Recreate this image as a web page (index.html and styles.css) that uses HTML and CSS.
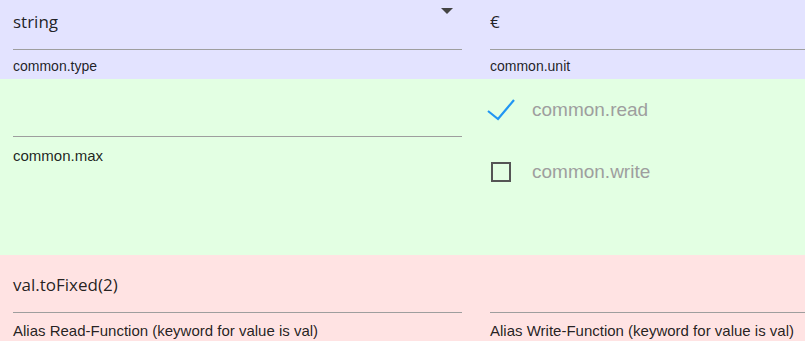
FILE: index.html
```html
<!DOCTYPE html>
<html lang="en">
  <head>
    <meta charset="UTF-8" />
    <meta name="viewport" content="width=device-width, initial-scale=1.0" />
    <title>State settings</title>

    <link rel="stylesheet" href="styles.css">
  </head>
  <body>
    <!-- Type / unit -->
    <div class="row row-type">
      <div class="cell">
        <div class="value select">
          string
          <span class="arrow"></span>
        </div>
        <div class="label">common.type</div>
      </div>
      <div class="cell cell-right">
        <div class="value">€</div>
        <div class="label">common.unit</div>
      </div>
    </div>

    <!-- Max / flags -->
    <div class="row row-limits">
      <div class="cell">
        <div class="value value-tall"></div>
        <div class="label label-max">common.max</div>
      </div>
      <div class="cell cell-right">
        <div class="check-list">
          <div class="check-row">
            <svg class="check-icon" width="30" height="30" viewBox="0 0 30 30">
              <path d="M2 16 L12 24 L28 5" fill="none" stroke="#2196f3" stroke-width="2.2" />
            </svg>
            <span class="check-text">common.read</span>
          </div>
          <div class="check-row">
            <svg class="check-icon" width="30" height="30" viewBox="0 0 30 30">
              <rect x="6" y="6" width="18" height="18" fill="none" stroke="#555" stroke-width="2" />
            </svg>
            <span class="check-text">common.write</span>
          </div>
        </div>
      </div>
    </div>

    <!-- Alias functions -->
    <div class="row row-alias">
      <div class="cell">
        <div class="value value-tall">val.toFixed(2)</div>
        <div class="label label-alias">Alias Read-Function (keyword for value is val)</div>
      </div>
      <div class="cell cell-right">
        <div class="value value-tall"></div>
        <div class="label label-alias">Alias Write-Function (keyword for value is val)</div>
      </div>
    </div>
  </body>
</html>
```

FILE: styles.css
```css
body {
  margin: 0;
  padding: 0;
  width: 805px;
  font-family: "Liberation Sans", Arial, sans-serif;
  color: rgba(0, 0, 0, 0.87);
  overflow: hidden;
}

.row {
  display: grid;
  grid-template-columns: 475px 1fr;
}

.row-type {
  height: 79px;
  background-color: #e3e3ff;
}

.row-limits {
  height: 176px;
  background-color: #e3ffe3;
}

.row-alias {
  height: 86px;
  background-color: #ffe3e3;
}

.cell {
  padding: 0 13px;
}

.cell-right {
  padding: 0 0 0 15px;
}

/* Text field */
.value {
  position: relative;
  height: 20px;
  padding: 12px 0 17px;
  font-family: "Open Sans", "Noto Sans", sans-serif;
  font-size: 17px;
  line-height: 20px;
  border-bottom: 1px solid #9e9e9e;
}

.value-tall {
  padding-top: 20px;
}

.select .arrow {
  position: absolute;
  top: 8px;
  right: 9px;
  width: 0;
  height: 0;
  border-left: 6.5px solid transparent;
  border-right: 6.5px solid transparent;
  border-top: 6px solid #444;
}

.label {
  margin-top: 8px;
  font-size: 14px;
  line-height: 16px;
}

.label-max {
  margin-top: 11px;
  font-size: 15px;
}

.label-alias {
  margin-top: 10px;
  font-size: 15px;
}

/* Checkboxes */
.check-list {
  display: flex;
  flex-direction: column;
  margin-left: -4px;
}

.check-row {
  height: 62px;
  display: flex;
  align-items: center;
}

.check-icon {
  flex-shrink: 0;
  margin-right: 16px;
}

.check-text {
  font-size: 19px;
  color: #9e9e9e;
}
```
